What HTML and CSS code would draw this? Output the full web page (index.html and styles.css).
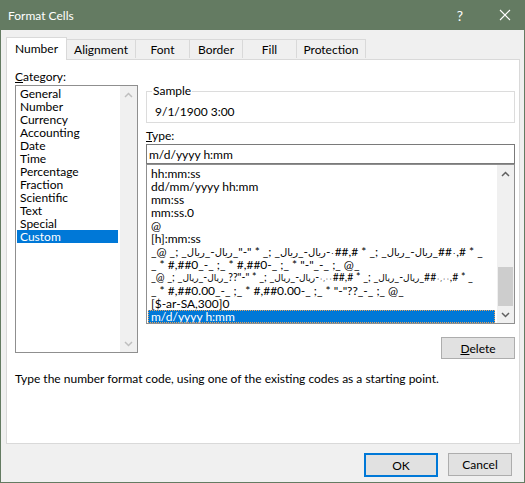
FILE: index.html
```html
<!DOCTYPE html>
<html lang="en">
<head>
    <meta charset="UTF-8">
    <title>Format Cells</title>
    <link rel="stylesheet" href="styles.css">
</head>
<body>
    <div class="window">
        <div class="titlebar">
            <span class="title">Format Cells</span>
            <span class="help">?</span>
            <span class="close">
                <svg width="12" height="12" viewBox="0 0 12 12"><path d="M1 1L11 11M11 1L1 11" stroke="#fff" stroke-width="1.1" fill="none"/></svg>
            </span>
        </div>

        <div class="tabs">
            <div class="tab active t-number">Number</div>
            <div class="tab t-align">Alignment</div>
            <div class="tab t-font">Font</div>
            <div class="tab t-border">Border</div>
            <div class="tab t-fill">Fill</div>
            <div class="tab t-protect">Protection</div>
        </div>

        <div class="panel">
            <div class="columns">
                <div class="left">
                    <div class="label"><u>C</u>ategory:</div>
                    <div class="listbox category">
                        <ul class="items">
                            <li>General</li>
                            <li>Number</li>
                            <li>Currency</li>
                            <li>Accounting</li>
                            <li>Date</li>
                            <li>Time</li>
                            <li>Percentage</li>
                            <li>Fraction</li>
                            <li>Scientific</li>
                            <li>Text</li>
                            <li>Special</li>
                            <li class="selected">Custom</li>
                        </ul>
                        <div class="scrollbar">
                            <div class="arrow disabled">
                                <svg width="9" height="6" viewBox="0 0 9 6"><path d="M1 5L4.5 1.5L8 5" stroke="currentColor" stroke-width="1.5" fill="none"/></svg>
                            </div>
                            <div class="track"></div>
                            <div class="arrow disabled">
                                <svg width="9" height="6" viewBox="0 0 9 6"><path d="M1 1L4.5 4.5L8 1" stroke="currentColor" stroke-width="1.5" fill="none"/></svg>
                            </div>
                        </div>
                    </div>
                </div>

                <div class="right">
                    <fieldset class="sample">
                        <legend>Sample</legend>
                        <div class="sample-value">9/1/1900 3:00</div>
                    </fieldset>
                    <div class="label type-label"><u>T</u>ype:</div>
                    <div class="textbox">m/d/yyyy h:mm</div>
                    <div class="listbox types">
                        <ul class="items">
                            <li>hh:mm:ss</li>
                            <li>dd/mm/yyyy hh:mm</li>
                            <li>mm:ss</li>
                            <li>mm:ss.0</li>
                            <li>@</li>
                            <li>[h]:mm:ss</li>
                            <li>_@ _; _<bdi class="ar">ريال</bdi>_-<bdi class="ar">ريال</bdi>_"-" * _; _<bdi class="ar">ريال</bdi>_-<bdi class="ar">ريال</bdi>-<bdi class="ad">٠</bdi>##,# * _; _<bdi class="ar">ريال</bdi>_-<bdi class="ar">ريال</bdi>_##<bdi class="ad">٠</bdi>,# * _</li>
                            <li>_ * #,##0_-_ ;_ * #,##0-_ ;_ * "-"_-_ ;_ @_</li>
                            <li class="narrow">_@ _; _<bdi class="ar">ريال</bdi>_-<bdi class="ar">ريال</bdi>_??"-" * _; _<bdi class="ar">ريال</bdi>_-<bdi class="ar">ريال</bdi>-<bdi class="ad" dir="ltr">٠,٠٠</bdi>##,# * _; _<bdi class="ar">ريال</bdi>_-<bdi class="ar">ريال</bdi>_##<bdi class="ad" dir="ltr">٠,٠٠</bdi>,# * _</li>
                            <li>_ * #,##0.00_-_ ;_ * #,##0.00-_ ;_ * "-"??_-_ ;_ @_</li>
                            <li>[$-ar-SA,300]0</li>
                            <li class="selected focused">m/d/yyyy h:mm</li>
                        </ul>
                        <div class="scrollbar">
                            <div class="arrow">
                                <svg width="9" height="6" viewBox="0 0 9 6"><path d="M1 5L4.5 1.5L8 5" stroke="currentColor" stroke-width="1.5" fill="none"/></svg>
                            </div>
                            <div class="track">
                                <div class="thumb"></div>
                            </div>
                            <div class="arrow">
                                <svg width="9" height="6" viewBox="0 0 9 6"><path d="M1 1L4.5 4.5L8 1" stroke="currentColor" stroke-width="1.5" fill="none"/></svg>
                            </div>
                        </div>
                    </div>
                    <div class="delete-row">
                        <button class="button delete"><u>D</u>elete</button>
                    </div>
                </div>
            </div>
            <p class="hint">Type the number format code, using one of the existing codes as a starting point.</p>
        </div>

        <div class="footer">
            <button class="button ok">OK</button>
            <button class="button cancel">Cancel</button>
        </div>
    </div>
</body>
</html>
```

FILE: styles.css
```css
body {
    margin: 0;
    font-family: Lato, "Liberation Sans", "DejaVu Sans", sans-serif;
    font-size: 12px;
    color: #000;
}
.window {
    width: 525px;
    height: 483px;
    box-sizing: border-box;
    background-color: #f0f0f0;
    border: 1px solid #647b62;
    border-top: none;
}
.titlebar {
    height: 30px;
    margin: 0 -1px;
    background-color: #647b62;
    color: #fff;
    display: flex;
    align-items: center;
    padding-left: 8px;
}
.title {
    flex: 1;
}
.help {
    width: 50px;
    text-align: center;
    font-size: 14px;
}
.close {
    width: 40px;
    display: flex;
    justify-content: center;
}

/* tabs */
.tabs {
    display: flex;
    align-items: flex-end;
    margin: 7px 0 0 5px;
    height: 22px;
}
.tab {
    box-sizing: border-box;
    height: 19px;
    border: 1px solid #d9d9d9;
    border-bottom: none;
    margin-left: -1px;
    text-align: center;
    line-height: 19px;
    margin-bottom: 1px;
}
.tab.active {
    height: 23px;
    margin-left: 0;
    margin-bottom: -1px;
    background-color: #fff;
    line-height: 21px;
    position: relative;
    z-index: 1;
}
.t-number { width: 61px; }
.t-align { width: 70px; }
.t-font { width: 55px; }
.t-border { width: 54px; }
.t-fill { width: 55px; }
.t-protect { width: 70px; }

/* panel */
.panel {
    box-sizing: border-box;
    width: 514px;
    height: 385px;
    margin-left: 5px;
    background-color: #fff;
    border: 1px solid #d9d9d9;
    padding: 9px 4px 0 8px;
}
.columns {
    display: flex;
    gap: 8px;
    align-items: flex-start;
}
.left {
    width: 123px;
}
.right {
    width: 369px;
}
.label {
    line-height: 15px;
}
.listbox {
    box-sizing: border-box;
    border: 1px solid #8f8f8f;
    display: flex;
    overflow: hidden;
    background-color: #fff;
}
.category {
    margin-top: 1px;
    height: 268px;
}
.items {
    list-style: none;
    margin: 0;
    padding: 1px 1px 0;
    flex: 1;
    min-width: 0;
}
.items li {
    height: 13px;
    line-height: 13px;
    padding-left: 3px;
    white-space: nowrap;
    overflow: hidden;
}
.items li.narrow {
    font-size: 10.5px;
}
.items li.selected {
    background-color: #0078d7;
    color: #fff;
}
.items li.focused {
    box-sizing: border-box;
    outline: 1px dotted #e8a25c;
    outline-offset: -1px;
}
.ar {
    font-family: "DejaVu Sans", sans-serif;
    font-size: 10px;
}
.ad {
    font-family: "DejaVu Sans", sans-serif;
    font-size: 8px;
}
.narrow .ar {
    font-size: 9px;
}
.narrow .ad {
    font-size: 7px;
}
.scrollbar {
    width: 17px;
    margin-left: 1px;
    background-color: #f0f0f0;
    display: flex;
    flex-direction: column;
}
.arrow {
    height: 17px;
    display: flex;
    align-items: center;
    justify-content: center;
    color: #606060;
}
.arrow.disabled {
    color: #bfbfbf;
}
.track {
    flex: 1;
    display: flex;
    flex-direction: column;
    justify-content: flex-end;
}
.thumb {
    height: 39px;
    margin: 0 1px;
    background-color: #cdcdcd;
}

/* right column */
.sample {
    box-sizing: border-box;
    margin: 15px 0 0;
    height: 39px;
    padding: 0 8px 0 5px;
    border: 1px solid #dcdcdc;
}
.sample legend {
    padding: 0 1px;
    line-height: 14px;
}
.sample-value {
    margin-top: 6px;
    line-height: 15px;
    padding-left: 3px;
}
.type-label {
    margin-top: 6px;
    line-height: 14px;
}
.textbox {
    box-sizing: border-box;
    margin-top: 1px;
    height: 20px;
    border: 1px solid #7a7a7a;
    padding: 1px 0 0 2px;
    line-height: 17px;
}
.types {
    height: 160px;
}
.types .items {
    padding-top: 2px;
}
.delete-row {
    display: flex;
    justify-content: flex-end;
    margin-top: 13px;
}
.hint {
    margin: 12px 0 0;
    line-height: 15px;
}

/* buttons */
.button {
    box-sizing: border-box;
    font-family: inherit;
    font-size: 12px;
    color: #000;
    background-color: #e1e1e1;
    border: 1px solid #adadad;
    padding: 0;
    height: 22px;
}
.delete {
    width: 74px;
}
.footer {
    display: flex;
    justify-content: flex-end;
    gap: 10px;
    margin-top: 9px;
    padding-right: 12px;
}
.ok {
    width: 74px;
    height: 24px;
    border: 2px solid #0078d7;
}
.cancel {
    width: 64px;
    height: 23px;
}
```
